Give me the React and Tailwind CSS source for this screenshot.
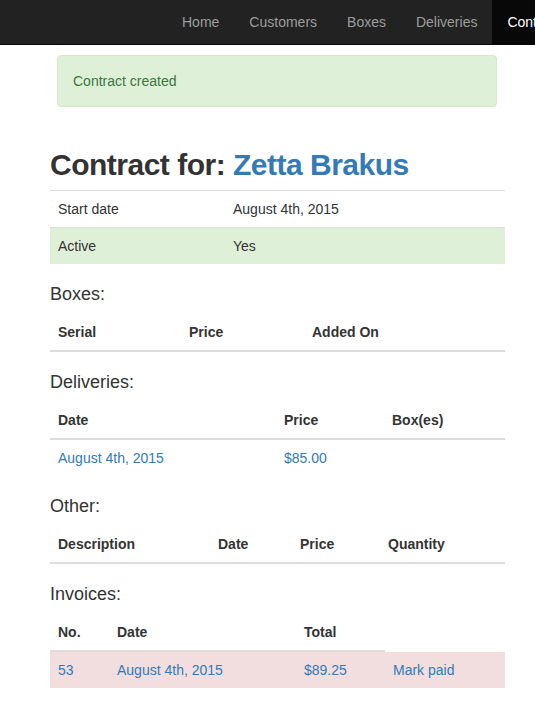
import React from "react";

const navItems = ["Home", "Customers", "Boxes", "Deliveries"];

// header + body rows for each sub-table, columns are fixed widths like the original bootstrap page
function DataTable({ cols, headers, rows = [], rowClass = "", borderCells }) {
  const n = borderCells ?? headers.length;
  return (
    <div className="mb-5">
      <div className={`grid ${cols}`}>
        {headers.map((h, i) => (
          <div
            key={i}
            className={`px-2 py-2 leading-5 font-bold ${i < n ? "border-b-2 border-[#ddd]" : ""}`}
          >
            {h}
          </div>
        ))}
      </div>
      {rows.map((r, ri) => (
        <div key={ri} className={`grid ${cols} ${rowClass}`}>
          {r.map((c, ci) => (
            <div key={ci} className="px-2 py-2 leading-5 text-[#337ab7]">
              {c}
            </div>
          ))}
        </div>
      ))}
    </div>
  );
}

export default function App() {
  return (
    <div className="min-h-screen bg-white text-[14px] leading-5 text-[#333] font-['Liberation_Sans',Arial,sans-serif]">
      <nav className="h-[45px] bg-[#222] border-b border-[#080808] overflow-hidden">
        <ul className="flex h-full pl-[167px] whitespace-nowrap">
          {navItems.map((item) => (
            <li key={item} className="flex items-center px-[15px] text-[#9d9d9d]">
              {item}
            </li>
          ))}
          <li className="flex items-center px-[15px] bg-[#080808] text-white">Contracts</li>
        </ul>
      </nav>

      <div className="mx-[57px] mt-[10px] w-[440px] rounded border border-[#d6e9c6] bg-[#dff0d8] px-[15px] py-[15px] text-[#3c763d]">
        Contract created
      </div>

      <div className="mx-[50px] w-[455px]">
        <h1 className="mt-[38px] mb-[5px] text-[30px] leading-[40px] font-bold tracking-[-0.5px]">
          Contract for: <a className="text-[#337ab7]">Zetta Brakus</a>
        </h1>

        <div className="mb-5">
          <div className="grid grid-cols-[175px_1fr] border-t border-[#ddd]">
            <div className="px-2 py-2">Start date</div>
            <div className="px-2 py-2">August 4th, 2015</div>
          </div>
          <div className="grid grid-cols-[175px_1fr] border-t border-[#ddd] bg-[#dff0d8]">
            <div className="px-2 py-2">Active</div>
            <div className="px-2 py-2">Yes</div>
          </div>
        </div>

        <h4 className="mb-[10px] text-[18px] leading-5 font-medium">Boxes:</h4>
        <DataTable cols="grid-cols-[131px_123px_1fr]" headers={["Serial", "Price", "Added On"]} />

        <h4 className="mb-[10px] text-[18px] leading-5 font-medium">Deliveries:</h4>
        <DataTable
          cols="grid-cols-[226px_108px_1fr]"
          headers={["Date", "Price", "Box(es)"]}
          rows={[["August 4th, 2015", "$85.00", ""]]}
        />

        <h4 className="mb-[10px] text-[18px] leading-5 font-medium">Other:</h4>
        <DataTable
          cols="grid-cols-[160px_82px_88px_1fr]"
          headers={["Description", "Date", "Price", "Quantity"]}
        />

        <h4 className="mb-[10px] text-[18px] leading-5 font-medium">Invoices:</h4>
        <DataTable
          cols="grid-cols-[59px_187px_89px_1fr]"
          headers={["No.", "Date", "Total", ""]}
          borderCells={3}
          rowClass="bg-[#f2dede]"
          rows={[["53", "August 4th, 2015", "$89.25", "Mark paid"]]}
        />
      </div>
    </div>
  );
}
